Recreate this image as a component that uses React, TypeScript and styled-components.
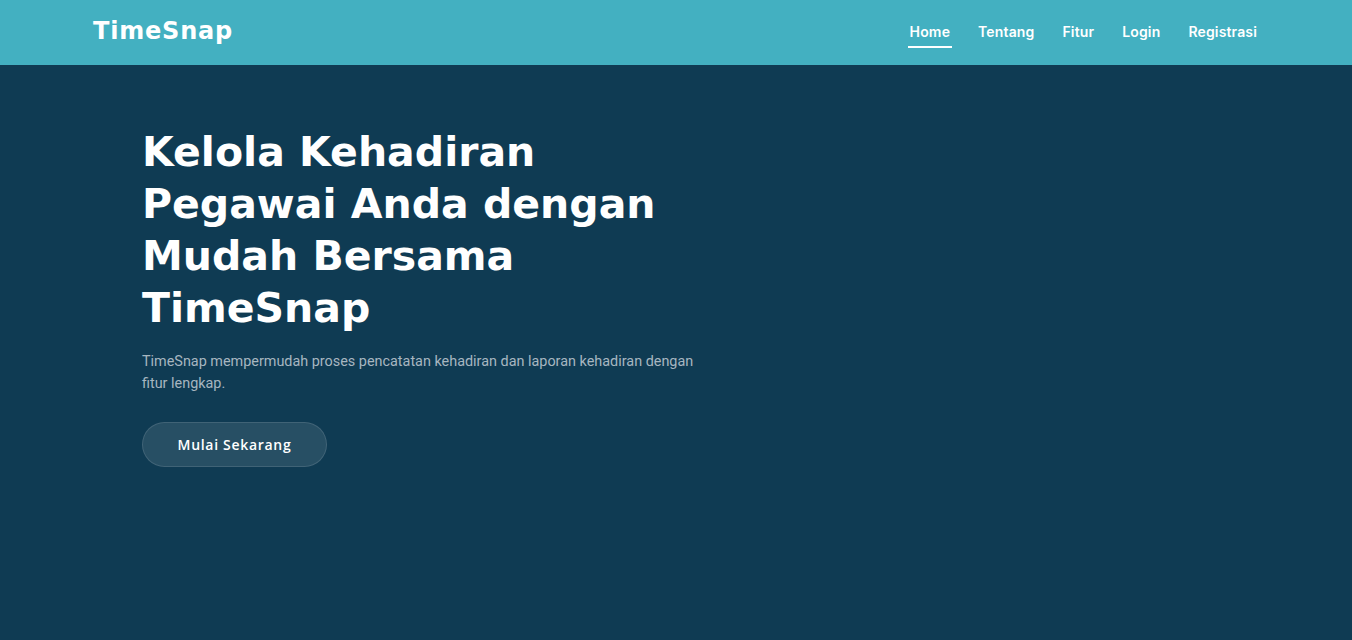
import React from "react";
import styled, { createGlobalStyle } from "styled-components";

const GlobalStyle = createGlobalStyle`
  *, *::before, *::after { box-sizing: border-box; }
  html, body { margin: 0; padding: 0; }
  body {
    background: #0f3b53;
    font-family: "Roboto", "Liberation Sans", sans-serif;
  }
`;

const Page = styled.div`
  min-height: 100vh;
  background: #0f3b53;
  display: flex;
  flex-direction: column;
`;

const Header = styled.header`
  height: 65px;
  flex-shrink: 0;
  background: #43b0c1;
  display: flex;
  align-items: center;
  justify-content: space-between;
  padding: 0 93px 0 93px;
`;

const Logo = styled.a`
  font-family: "DejaVu Sans", sans-serif;
  font-weight: 700;
  font-size: 24px;
  line-height: 24px;
  letter-spacing: 0.8px;
  color: #ffffff;
  text-decoration: none;
  margin-top: -4px;
`;

const Nav = styled.nav`
  display: flex;
  align-items: center;
  gap: 24px;
`;

const NavLink = styled.a<{ $active?: boolean }>`
  position: relative;
  font-family: "Inter", sans-serif;
  font-weight: 600;
  font-size: 14px;
  line-height: 20px;
  letter-spacing: 0.15px;
  color: #ffffff;
  text-decoration: none;
  padding: 0 2px;
  margin-top: -1px;

  &::after {
    content: "";
    position: absolute;
    left: 0;
    right: 0;
    top: calc(100% + 4px);
    height: 2px;
    background: #ffffff;
    display: ${(p) => (p.$active ? "block" : "none")};
  }
`;

const Hero = styled.section`
  flex: 1;
  padding: 61px 0 0 142px;
`;

const HeroContent = styled.div`
  max-width: 570px;
`;

const Title = styled.h1`
  margin: 0;
  font-family: "DejaVu Sans", sans-serif;
  font-weight: 700;
  font-size: 41px;
  line-height: 52px;
  color: #ffffff;
`;

const Lead = styled.p`
  margin: 17px 0 0;
  font-family: "Roboto", sans-serif;
  font-size: 14.4px;
  line-height: 22px;
  color: #a7b6c0;
`;

const Cta = styled.a`
  margin-top: 27px;
  width: 185px;
  height: 45px;
  display: inline-flex;
  align-items: center;
  justify-content: center;
  border-radius: 50px;
  background: rgba(255, 255, 255, 0.1);
  border: 1px solid rgba(255, 255, 255, 0.12);
  color: #ffffff;
  font-family: "Open Sans", sans-serif;
  font-weight: 600;
  font-size: 14px;
  letter-spacing: 0.7px;
  text-decoration: none;
`;

const links = ["Home", "Tentang", "Fitur", "Login", "Registrasi"];

export default function App() {
  return (
    <>
      <GlobalStyle />
      <Page>
        <Header>
          <Logo href="#">TimeSnap</Logo>
          <Nav>
            {links.map((l, i) => (
              <NavLink key={l} href="#" $active={i === 0}>
                {l}
              </NavLink>
            ))}
          </Nav>
        </Header>
        <Hero>
          <HeroContent>
            <Title>
              Kelola Kehadiran
              <br />
              Pegawai Anda dengan
              <br />
              Mudah Bersama
              <br />
              TimeSnap
            </Title>
            <Lead>
              TimeSnap mempermudah proses pencatatan kehadiran dan laporan
              kehadiran dengan fitur lengkap.
            </Lead>
            <Cta href="#">Mulai Sekarang</Cta>
          </HeroContent>
        </Hero>
      </Page>
    </>
  );
}
